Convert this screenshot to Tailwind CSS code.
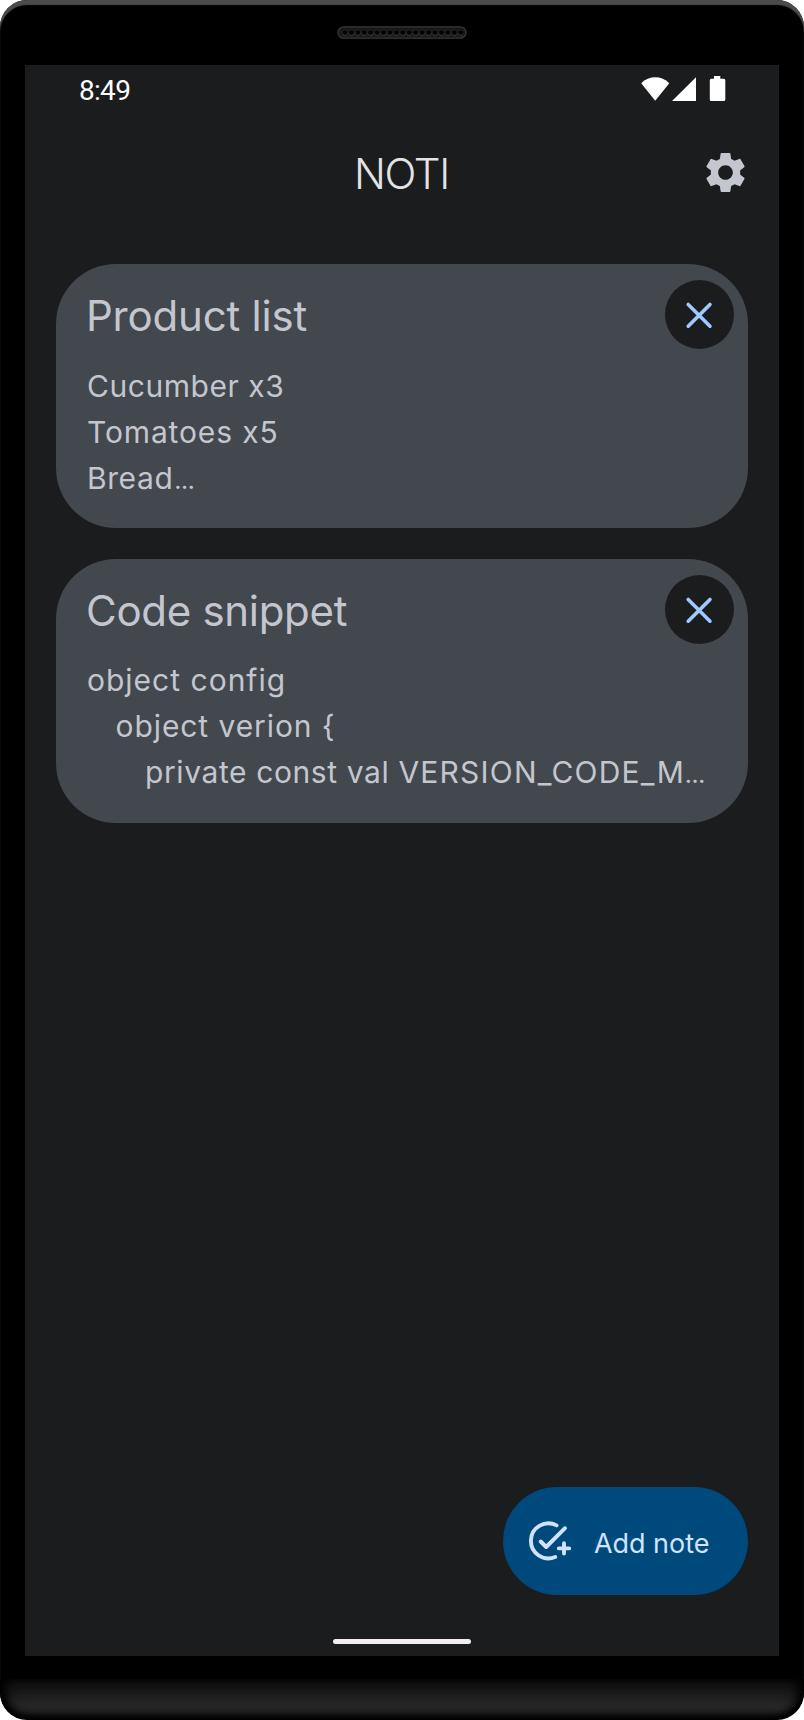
<!DOCTYPE html>
<html lang="en">
<head>
<meta charset="utf-8">
<title>NOTI</title>
<script src="https://cdn.jsdelivr.net/npm/@tailwindcss/browser@4"></script>
</head>
<body class="bg-white font-['Inter',sans-serif]">
<div class="flex flex-col w-[804px] h-[1720px] rounded-[27px] overflow-hidden bg-black shadow-[inset_0_5px_1px_#4b4b4b]">

  <!-- Speaker -->
  <div class="flex justify-center h-[65px] pt-[26px]">
    <svg class="w-[130px] h-[13px]" viewBox="0 0 130 13">
      <defs>
        <pattern id="holes" x="4.8" y="0" width="6.43" height="13" patternUnits="userSpaceOnUse">
          <circle cx="3.2" cy="7" r="2.7" fill="#444"/>
          <circle cx="3.2" cy="6.6" r="2.4" fill="#000"/>
        </pattern>
      </defs>
      <rect x="1" y="0.8" width="128" height="11.4" rx="5.7" fill="#191919" stroke="#383838" stroke-width="1.2"/>
      <rect x="4.8" y="2" width="121" height="9" fill="url(#holes)"/>
    </svg>
  </div>

  <!-- Screen -->
  <main class="flex flex-col w-[754px] h-[1591px] mx-auto bg-[#1b1c1e]">
    <div class="flex justify-between h-[54px] pl-[54px] pr-[53px] pt-[11px]">
      <span class="pt-px font-['Roboto'] text-[28px] leading-[28px] tracking-[-0.7px] text-white">8:49</span>
      <svg class="w-[86px] h-[25px]" viewBox="0 0 86 25" fill="#fff">
        <path d="M1.2 7.2C9 -.7 21.5 -.7 29.3 7.2L15.2 24.8Z"/>
        <path d="M32 25L56 1.2V25Z"/>
        <path d="M70.5 2.7H74V0H80.3V2.7H83.8Q85.3 2.7 85.3 4.2V23.5Q85.3 25 83.8 25H71.2Q69.8 25 69.8 23.5V4.2Q69.8 2.7 71.2 2.7Z"/>
      </svg>
    </div>

    <header class="grid grid-cols-[1fr_auto_1fr] items-center h-[107px] pr-[29px] pl-[28px]">
      <span></span>
      <h1 class="h-[49px] text-[42px] leading-[52px] font-light tracking-[-1.2px] text-[#e3e2e6]">NOTI</h1>
      <svg class="justify-self-end w-[49px] h-[49px]" viewBox="0 0 24 24" fill="#c3c6cf">
        <path d="M19.14 12.94c.04-.3.06-.61.06-.94 0-.32-.02-.64-.07-.94l2.03-1.58c.18-.14.23-.41.12-.61l-1.92-3.32c-.12-.22-.37-.29-.59-.22l-2.39.96c-.5-.38-1.03-.7-1.62-.94l-.36-2.54c-.04-.24-.24-.41-.48-.41h-3.84c-.24 0-.43.17-.47.41l-.36 2.54c-.59.24-1.13.57-1.62.94l-2.39-.96c-.22-.08-.47 0-.59.22L2.74 8.87c-.12.21-.08.47.12.61l2.03 1.58c-.05.3-.09.63-.09.94s.02.64.07.94l-2.03 1.58c-.18.14-.23.41-.12.61l1.92 3.32c.12.22.37.29.59.22l2.39-.96c.5.38 1.03.7 1.62.94l.36 2.54c.05.24.24.41.48.41h3.84c.24 0 .44-.17.47-.41l.36-2.54c.59-.24 1.13-.56 1.62-.94l2.39.96c.22.08.47 0 .59-.22l1.92-3.32c.12-.22.07-.47-.12-.61l-2.01-1.58zM12 15.6c-1.98 0-3.6-1.62-3.6-3.6s1.62-3.6 3.6-3.6 3.6 1.62 3.6 3.6-1.62 3.6-3.6 3.6z"/>
      </svg>
    </header>

    <section class="flex flex-col gap-[31px] mt-[38px] px-[31px]">
      <article class="h-[264px] rounded-[60px] bg-[#43474e] pt-4 pl-[30px] pr-[14.5px] text-[#c3c6cf]">
        <div class="flex justify-between h-[69px]">
          <h2 class="pt-[10px] text-[42px] leading-[52px] tracking-[-0.2px]">Product list</h2>
          <button class="flex items-center justify-center size-[69px] rounded-full bg-[#1b1c1e]">
            <svg class="w-[28px] h-[28px]" viewBox="0 0 28 28" fill="none" stroke="#9ecaff" stroke-width="3.6" stroke-linecap="round"><path d="M3.2 3.4L25 25.2M25 3.4L3.2 25.2"/></svg>
          </button>
        </div>
        <div class="mt-[14px] pl-px text-[30px] leading-[46px]">
          <p class="tracking-[0.55px]">Cucumber x3</p>
          <p class="tracking-[0.87px]">Tomatoes x5</p>
          <p class="tracking-[0.6px]">Bread<span class="pl-[1px] text-[21px] leading-none font-semibold tracking-normal">…</span></p>
        </div>
      </article>

      <article class="h-[264px] rounded-[60px] bg-[#43474e] pt-4 pl-[30px] pr-[14.5px] text-[#c3c6cf]">
        <div class="flex justify-between h-[69px]">
          <h2 class="pt-[10px] text-[42px] leading-[52px] tracking-[-0.3px]">Code snippet</h2>
          <button class="flex items-center justify-center size-[69px] rounded-full bg-[#1b1c1e]">
            <svg class="w-[28px] h-[28px]" viewBox="0 0 28 28" fill="none" stroke="#9ecaff" stroke-width="3.6" stroke-linecap="round"><path d="M3.2 3.4L25 25.2M25 3.4L3.2 25.2"/></svg>
          </button>
        </div>
        <div class="mt-[13px] pl-px text-[30px] leading-[46px] whitespace-nowrap">
          <p class="tracking-[1px]">object config</p>
          <p class="pl-[28.5px] tracking-[0.92px]">object verion {</p>
          <p class="pl-[58px] tracking-[0.6px]">private const val <span class="tracking-[1.2px]">VERSION_CODE_M</span><span class="text-[21px] leading-none font-semibold tracking-normal">…</span></p>
        </div>
      </article>
    </section>

    <button class="flex items-center self-end w-[245px] h-[107.5px] mt-auto mr-[31px] pl-[17px] rounded-full bg-[#00497d] text-[#d1e4ff]">
      <svg class="w-[60px] h-[60px] mb-[2px]" viewBox="0 0 60 60" fill="none" stroke="currentColor" stroke-width="3.9" stroke-linecap="round" stroke-linejoin="round">
        <path d="M36.6 15.4A17.5 17.5 0 1 0 35.2 47"/>
        <path d="M20.7 31.5L26.2 37L45 18.2"/>
        <path d="M44 33.2V43.6M38.8 38.4H49.2"/>
      </svg>
      <span class="pl-[14px] pt-[6px] text-[27px] leading-[32px] font-normal tracking-[-0.05px]">Add note</span>
    </button>

    <div class="self-center w-[138px] h-[4.5px] mt-[44.5px] mb-[12.5px] rounded-full bg-[#f1edf1]"></div>
  </main>

  <!-- Lower lip of the device -->
  <div class="h-[40px] mt-auto mb-px rounded-b-[27px] bg-linear-to-b from-[#0b0b0b] via-[#262626] via-65% to-[#242424] shadow-[inset_0_-4px_6px_#000,inset_10px_0_12px_-4px_#000,inset_-10px_0_12px_-4px_#000]"></div>
</div>
</body>
</html>
